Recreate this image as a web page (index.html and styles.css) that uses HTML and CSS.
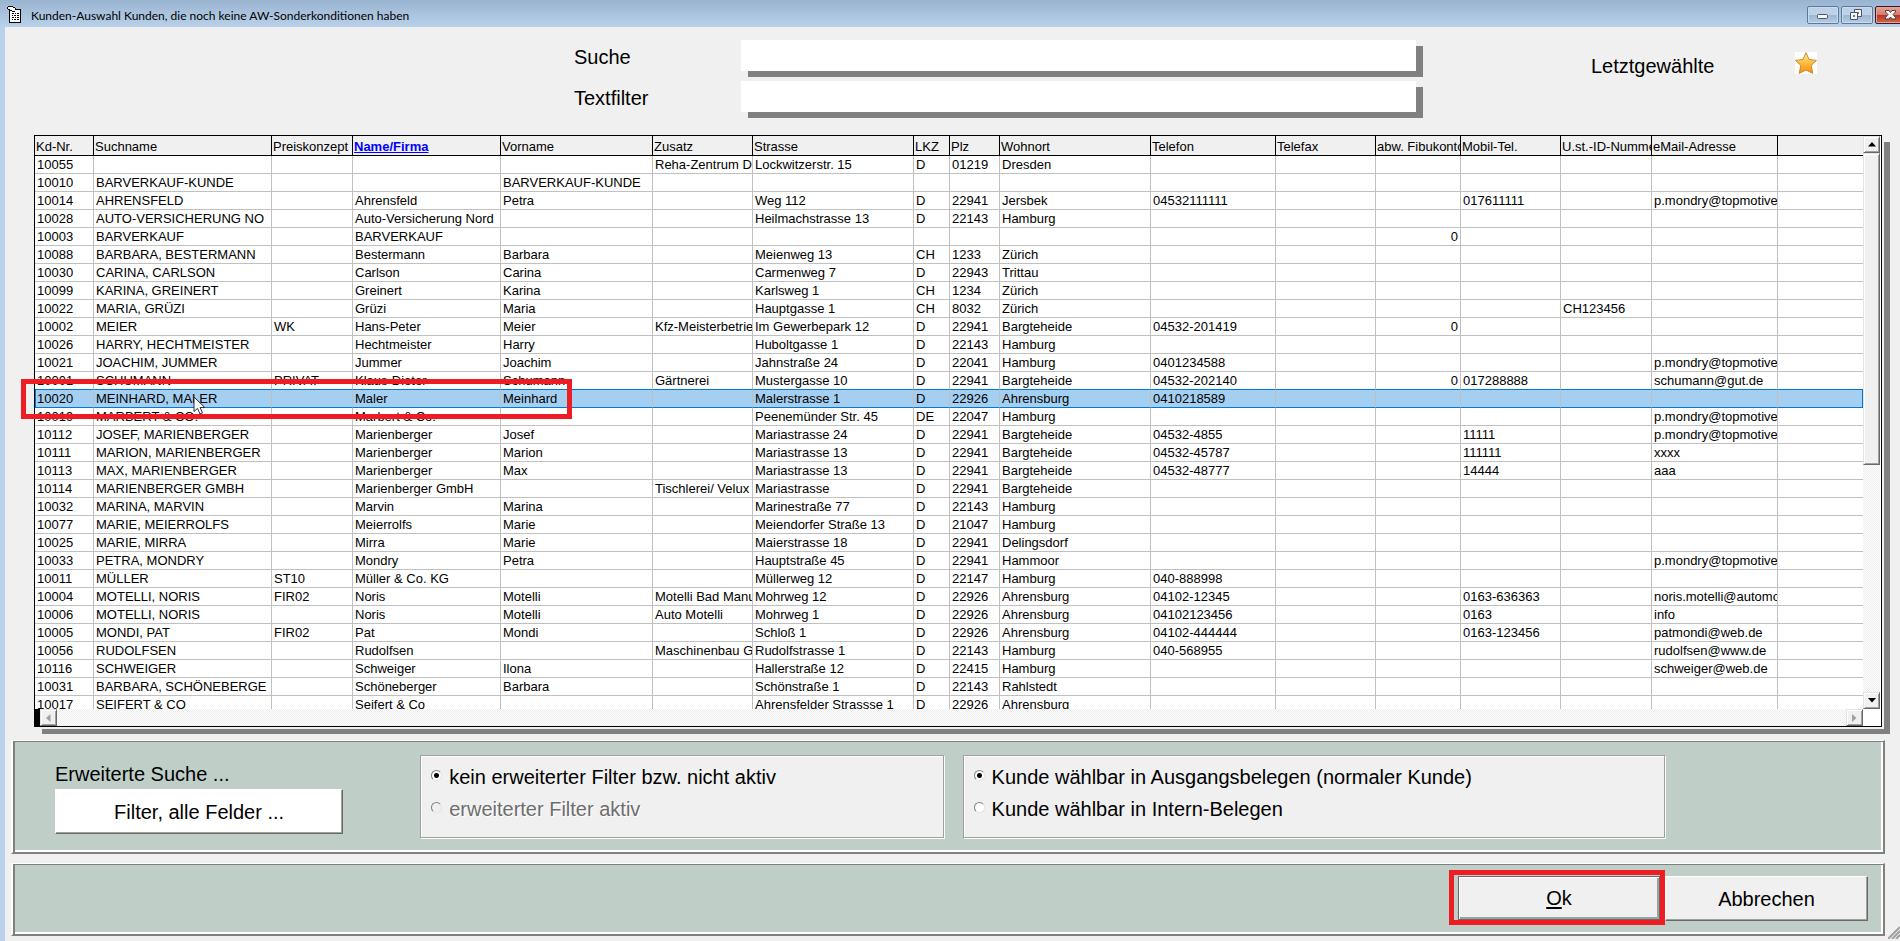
FILE: index.html
```html
<!DOCTYPE html>
<html lang="de">
<head>
<meta charset="utf-8">
<title>Kunden-Auswahl</title>
<link rel="stylesheet" href="styles.css">
</head>
<body>
<header class="titlebar">
  <svg class="app-icon" width="15" height="17" viewBox="0 0 15 17" shape-rendering="crispEdges" aria-hidden="true">
    <path d="M2 3h12v14H2z" fill="#000"/>
    <path d="M3 4h10v12H3z" fill="#fff"/>
    <path d="M5 7h2v1H5zM8 7h1v1H8zM10 7h2v1h-2zM5 9h1v1H5zM7 9h2v1H7zM10 9h2v1h-2zM5 11h2v1H5zM8 11h1v1H8zM10 11h2v1h-2zM5 13h1v1H5zM7 13h2v1H7zM10 13h2v1h-2z" fill="#000"/>
    <path d="M1 1h5v1h2v2h1v2H7V5H4V4H2V3H1z" fill="#fff"/>
    <path d="M1 0h5v1H1zM0 1h1v2H0zM6 1h2v1H6zM8 2h1v2H8zM1 3h2v1H1zM3 4h2v1H3zM5 5h3v1H5z" fill="#000"/>
  </svg>
  <h1 class="title">Kunden-Auswahl Kunden, die noch keine AW-Sonderkonditionen haben</h1>
  <div class="window-buttons">
    <button class="wbtn" type="button" aria-label="Minimieren"><svg width="30" height="16" viewBox="0 0 30 16"><rect x="9.500" y="7.500" width="10" height="4" rx="1" fill="#f4f4f6" stroke="#4c5468"/></svg></button>
    <button class="wbtn" type="button" aria-label="Wiederherstellen"><svg width="30" height="16" viewBox="0 0 30 16"><g fill="#f4f4f6" stroke="#4c5468"><path fill-rule="evenodd" d="M12.500 2.500h7v7h-7zM15.500 5.500h1v1h-1z"/><path fill-rule="evenodd" d="M8.500 5.500h7v7h-7zM11.500 8.500h1v1h-1z"/></g></svg></button>
    <button class="wbtn wbtn-close" type="button" aria-label="Schließen"><svg width="30" height="16" viewBox="0 0 30 16"><path d="M9.500 3.500h3.500l1.500 2 1.500-2h3.500v1.500l-2.500 2.500 2.500 3v1.500h-3.500l-1.500-2-1.500 2H9.500V10.500l2.500-3-2.500-2.500z" fill="#f4f4f6" stroke="#4c4048"/></svg></button>
  </div>
</header>
<main class="window">
  <section class="search">
    <label class="search-label" for="suche">Suche</label>
    <input class="search-input" id="suche" type="text">
    <label class="search-label second" for="textfilter">Textfilter</label>
    <input class="search-input second" id="textfilter" type="text">
    <span class="recent">Letztgewählte</span>
    <button class="star" type="button" aria-label="Letztgewählte anzeigen">
      <svg width="22" height="22" viewBox="0 0 22 22"><defs><linearGradient id="gold" x1="0" y1="0" x2="0" y2="1"><stop offset="0" stop-color="#ffeaa8"/><stop offset=".45" stop-color="#ffc445"/><stop offset="1" stop-color="#f98a0c"/></linearGradient></defs><path d="M11 .7l3.100 6.800 7.400.9-5.300 5 1.600 8L11 18l-6.800 3.400 1.600-8-5.300-5 7.400-.9z" fill="url(#gold)" stroke="#c98a35" stroke-linejoin="round"/></svg>
    </button>
  </section>

  <section class="grid-frame">
    <div class="grid-view">
      <table class="customers">
        <colgroup><col class="w58"><col class="w178"><col class="w81"><col class="w148"><col class="w152"><col class="w100"><col class="w161"><col class="w36"><col class="w50"><col class="w151"><col class="w125"><col class="w100"><col class="w85"><col class="w100"><col class="w91"><col class="w126"><col></colgroup>
        <thead><tr><th>Kd-Nr.<th>Suchname<th>Preiskonzept<th><a class="sorted" href="#">Name/Firma</a><th>Vorname<th>Zusatz<th>Strasse<th>LKZ<th>Plz<th>Wohnort<th>Telefon<th>Telefax<th>abw. Fibukonto<th>Mobil-Tel.<th>U.st.-ID-Nummer<th>eMail-Adresse<th></tr></thead>
        <tbody>
        <tr><td>10055<td><td><td><td><td>Reha-Zentrum De<td>Lockwitzerstr. 15<td>D<td>01219<td>Dresden<td><td><td><td><td><td><td></tr>
        <tr><td>10010<td>BARVERKAUF-KUNDE<td><td><td>BARVERKAUF-KUNDE<td><td><td><td><td><td><td><td><td><td><td><td></tr>
        <tr><td>10014<td>AHRENSFELD<td><td>Ahrensfeld<td>Petra<td><td>Weg 112<td>D<td>22941<td>Jersbek<td>04532111111<td><td><td>017611111<td><td>p.mondry@topmotive<td></tr>
        <tr><td>10028<td>AUTO-VERSICHERUNG NO<td><td>Auto-Versicherung Nord<td><td><td>Heilmachstrasse 13<td>D<td>22143<td>Hamburg<td><td><td><td><td><td><td></tr>
        <tr><td>10003<td>BARVERKAUF<td><td>BARVERKAUF<td><td><td><td><td><td><td><td><td>0<td><td><td><td></tr>
        <tr><td>10088<td>BARBARA, BESTERMANN<td><td>Bestermann<td>Barbara<td><td>Meienweg 13<td>CH<td>1233<td>Zürich<td><td><td><td><td><td><td></tr>
        <tr><td>10030<td>CARINA, CARLSON<td><td>Carlson<td>Carina<td><td>Carmenweg 7<td>D<td>22943<td>Trittau<td><td><td><td><td><td><td></tr>
        <tr><td>10099<td>KARINA, GREINERT<td><td>Greinert<td>Karina<td><td>Karlsweg 1<td>CH<td>1234<td>Zürich<td><td><td><td><td><td><td></tr>
        <tr><td>10022<td>MARIA, GRÜZI<td><td>Grüzi<td>Maria<td><td>Hauptgasse 1<td>CH<td>8032<td>Zürich<td><td><td><td><td>CH123456<td><td></tr>
        <tr><td>10002<td>MEIER<td>WK<td>Hans-Peter<td>Meier<td>Kfz-Meisterbetrieb<td>Im Gewerbepark 12<td>D<td>22941<td>Bargteheide<td>04532-201419<td><td>0<td><td><td><td></tr>
        <tr><td>10026<td>HARRY, HECHTMEISTER<td><td>Hechtmeister<td>Harry<td><td>Huboltgasse 1<td>D<td>22143<td>Hamburg<td><td><td><td><td><td><td></tr>
        <tr><td>10021<td>JOACHIM, JUMMER<td><td>Jummer<td>Joachim<td><td>Jahnstraße 24<td>D<td>22041<td>Hamburg<td>0401234588<td><td><td><td><td>p.mondry@topmotive<td></tr>
        <tr class="before-selected"><td>10001<td>SCHUMANN<td>PRIVAT<td>Klaus-Dieter<td>Schumann<td>Gärtnerei<td>Mustergasse 10<td>D<td>22941<td>Bargteheide<td>04532-202140<td><td>0<td>017288888<td><td>schumann@gut.de<td></tr>
        <tr class="selected"><td>10020<td>MEINHARD, MALER<td><td>Maler<td>Meinhard<td><td>Malerstrasse 1<td>D<td>22926<td>Ahrensburg<td>0410218589<td><td><td><td><td><td></tr>
        <tr><td>10019<td>MARBERT &amp; CO.<td><td>Marbert &amp; Co.<td><td><td>Peenemünder Str. 45<td>DE<td>22047<td>Hamburg<td><td><td><td><td><td>p.mondry@topmotive<td></tr>
        <tr><td>10112<td>JOSEF, MARIENBERGER<td><td>Marienberger<td>Josef<td><td>Mariastrasse 24<td>D<td>22941<td>Bargteheide<td>04532-4855<td><td><td>11111<td><td>p.mondry@topmotive<td></tr>
        <tr><td>10111<td>MARION, MARIENBERGER<td><td>Marienberger<td>Marion<td><td>Mariastrasse 13<td>D<td>22941<td>Bargteheide<td>04532-45787<td><td><td>111111<td><td>xxxx<td></tr>
        <tr><td>10113<td>MAX, MARIENBERGER<td><td>Marienberger<td>Max<td><td>Mariastrasse 13<td>D<td>22941<td>Bargteheide<td>04532-48777<td><td><td>14444<td><td>aaa<td></tr>
        <tr><td>10114<td>MARIENBERGER GMBH<td><td>Marienberger GmbH<td><td>Tischlerei/ Velux<td>Mariastrasse<td>D<td>22941<td>Bargteheide<td><td><td><td><td><td><td></tr>
        <tr><td>10032<td>MARINA, MARVIN<td><td>Marvin<td>Marina<td><td>Marinestraße 77<td>D<td>22143<td>Hamburg<td><td><td><td><td><td><td></tr>
        <tr><td>10077<td>MARIE, MEIERROLFS<td><td>Meierrolfs<td>Marie<td><td>Meiendorfer Straße 13<td>D<td>21047<td>Hamburg<td><td><td><td><td><td><td></tr>
        <tr><td>10025<td>MARIE, MIRRA<td><td>Mirra<td>Marie<td><td>Maierstrasse 18<td>D<td>22941<td>Delingsdorf<td><td><td><td><td><td><td></tr>
        <tr><td>10033<td>PETRA, MONDRY<td><td>Mondry<td>Petra<td><td>Hauptstraße 45<td>D<td>22941<td>Hammoor<td><td><td><td><td><td>p.mondry@topmotive<td></tr>
        <tr><td>10011<td>MÜLLER<td>ST10<td>Müller &amp; Co. KG<td><td><td>Müllerweg 12<td>D<td>22147<td>Hamburg<td>040-888998<td><td><td><td><td><td></tr>
        <tr><td>10004<td>MOTELLI, NORIS<td>FIR02<td>Noris<td>Motelli<td>Motelli Bad Manu<td>Mohrweg 12<td>D<td>22926<td>Ahrensburg<td>04102-12345<td><td><td>0163-636363<td><td>noris.motelli@automo<td></tr>
        <tr><td>10006<td>MOTELLI, NORIS<td><td>Noris<td>Motelli<td>Auto Motelli<td>Mohrweg 1<td>D<td>22926<td>Ahrensburg<td>04102123456<td><td><td>0163<td><td>info<td></tr>
        <tr><td>10005<td>MONDI, PAT<td>FIR02<td>Pat<td>Mondi<td><td>Schloß 1<td>D<td>22926<td>Ahrensburg<td>04102-444444<td><td><td>0163-123456<td><td>patmondi@web.de<td></tr>
        <tr><td>10056<td>RUDOLFSEN<td><td>Rudolfsen<td><td>Maschinenbau G<td>Rudolfstrasse 1<td>D<td>22143<td>Hamburg<td>040-568955<td><td><td><td><td>rudolfsen@www.de<td></tr>
        <tr><td>10116<td>SCHWEIGER<td><td>Schweiger<td>Ilona<td><td>Hallerstraße 12<td>D<td>22415<td>Hamburg<td><td><td><td><td><td>schweiger@web.de<td></tr>
        <tr><td>10031<td>BARBARA, SCHÖNEBERGE<td><td>Schöneberger<td>Barbara<td><td>Schönstraße 1<td>D<td>22143<td>Rahlstedt<td><td><td><td><td><td><td></tr>
        <tr><td>10017<td>SEIFERT &amp; CO<td><td>Seifert &amp; Co<td><td><td>Ahrensfelder Strassse 1<td>D<td>22926<td>Ahrensburg<td><td><td><td><td><td><td></tr>
        </tbody>
      </table>
    </div>
    <div class="vscroll">
      <button class="sbtn" type="button" aria-label="Nach oben"><svg width="8" height="5" viewBox="0 0 8 5"><path d="M4 0l4 4.500H0z"/></svg></button>
      <div class="thumb"></div>
      <button class="sbtn sbtn-end" type="button" aria-label="Nach unten"><svg width="8" height="5" viewBox="0 0 8 5"><path d="M0 0h8L4 4.500z"/></svg></button>
    </div>
    <div class="hscroll">
      <button class="sbtn sbtn-off" type="button" aria-label="Nach links" disabled><svg width="5" height="8" viewBox="0 0 5 8"><path d="M4.500 0v8L0 4z"/></svg></button>
      <button class="sbtn sbtn-off sbtn-end" type="button" aria-label="Nach rechts" disabled><svg width="5" height="8" viewBox="0 0 5 8"><path d="M0 0v8l4.500-4z"/></svg></button>
    </div>
    <div class="corner"></div>
    <div class="mark mark-row"></div>
    <svg class="pointer" width="13" height="20" viewBox="0 0 13 20" aria-hidden="true"><path d="M1 1v14.500l3.500-3.200L7 18l2.500-1.100L7.100 11.500h4.700z" fill="#fff" stroke="#222a4a"/></svg>
  </section>

  <section class="panel filters">
    <div class="advanced">
      <span class="advanced-title">Erweiterte Suche ...</span>
      <button class="btn btn-filter" type="button">Filter, alle Felder ...</button>
    </div>
    <div class="group group-a">
      <label class="choice"><input class="radio" type="radio" name="filter" checked>kein erweiterter Filter bzw. nicht aktiv</label>
      <label class="choice off"><input class="radio" type="radio" name="filter" disabled>erweiterter Filter aktiv</label>
    </div>
    <div class="group group-b">
      <label class="choice"><input class="radio" type="radio" name="art" checked>Kunde wählbar in Ausgangsbelegen (normaler Kunde)</label>
      <label class="choice"><input class="radio" type="radio" name="art">Kunde wählbar in Intern-Belegen</label>
    </div>
  </section>

  <section class="panel actions">
    <div class="ok-wrap"><button class="btn btn-ok" type="button"><u>O</u>k</button><div class="mark mark-ok"></div></div>
    <button class="btn btn-cancel" type="button">Abbrechen</button>
  </section>
  <svg class="grip" width="12" height="14" viewBox="0 0 12 14" aria-hidden="true"><path d="M0 14L12 2M4 14l8-8M8 14l4-4" stroke="#a0a0a0" stroke-width="2"/></svg>
</main>
</body>
</html>
```
FILE: styles.css
```css
* { box-sizing: border-box; }

body {
  margin: 0;
  height: 100vh;
  display: flex;
  flex-direction: column;
  overflow: hidden;
  background: #b9d1ea;
  color: #000;
  font: 20px/24px "Liberation Sans", Arial, sans-serif;
}

button, input { margin: 0; padding: 0; font: inherit; color: inherit; border-radius: 0; }

/* title bar */
.titlebar {
  flex: none;
  display: flex;
  height: 27px;
  padding: 6px 0 0 7px;
  background: linear-gradient(#99b4d1, #b9d1ea);
}
.app-icon { flex: none; }
.title {
  flex: 1;
  margin: 0 0 0 9px;
  font: 12px/19px Lato, "Open Sans", sans-serif;
  white-space: nowrap;
}
.window-buttons { display: flex; gap: 2px; width: 93px; overflow: hidden; }
.wbtn {
  flex: none;
  width: 32px;
  height: 18px;
  border: 1px solid #5f7896;
  border-radius: 2px;
  background: linear-gradient(#bdd1e8 50%, #9cb6d3 50%, #b3cde6);
  box-shadow: inset 0 0 0 1px #c9dcef;
}
.wbtn svg { display: block; }
.wbtn-close {
  border-color: #431422;
  background: linear-gradient(#e5a294, #d5796a 50%, #b8321d 50%, #cf6a50);
  box-shadow: inset 0 0 0 1px #e0a498;
}

/* window body */
.window {
  position: relative;
  flex: 1;
  min-height: 0;
  display: flex;
  flex-direction: column;
  margin-left: 5px;
  padding-bottom: 5px;
  background: #f0f0f0;
}

.search {
  flex: none;
  display: grid;
  grid-template-columns: minmax(0, 569fr) minmax(0, 167fr) minmax(0, 675fr) minmax(0, 175fr) minmax(0, 204fr) minmax(0, 105fr);
  grid-template-rows: 31px 31px;
  row-gap: 10px;
  height: 108px;
  padding-top: 13px;
}
.search-label { grid-column: 2; padding-top: 5px; }
.search-input {
  grid-column: 3;
  height: 31px;
  border: 0;
  background: #fff;
  box-shadow: 7px 6px 0 #808080;
  padding: 0 6px;
}
.recent { grid-column: 5; grid-row: 1 / 3; padding-top: 14px; }
.star {
  grid-column: 6;
  grid-row: 1 / 3;
  width: 22px;
  height: 22px;
  margin-top: 12px;
  border: 0;
  background: #fff;
}
.star svg { display: block; }

/* customer list */
.grid-frame {
  position: relative;
  flex: 1;
  min-height: 0;
  display: grid;
  grid-template-columns: minmax(0, 1fr) 18px;
  grid-template-rows: minmax(0, 1fr) 17px;
  margin: 0 18px 13px 29px;
  border: 1px solid #000;
  background: #fff;
  box-shadow: 2px 2px 0 #f0f0f0, 8px 7px 0 #808080;
}
.grid-view { overflow: hidden; }
.customers {
  width: 100%;
  table-layout: fixed;
  border-collapse: separate;
  border-spacing: 0;
  font-size: 13px;
  line-height: 17px;
}
.w36 { width: 36px; }
.w50 { width: 50px; }
.w58 { width: 58px; }
.w81 { width: 81px; }
.w85 { width: 85px; }
.w91 { width: 91px; }
.w100 { width: 100px; }
.w125 { width: 125px; }
.w126 { width: 126px; }
.w148 { width: 148px; }
.w151 { width: 151px; }
.w152 { width: 152px; }
.w161 { width: 161px; }
.w178 { width: 178px; }
.customers th {
  height: 20px;
  padding: 2px 0 0 1px;
  border-left: 1px solid #000;
  border-bottom: 1px solid #000;
  background: #f0f0f0;
  font-weight: normal;
  text-align: left;
  white-space: nowrap;
  overflow: hidden;
}
.customers td {
  height: 18px;
  padding: 0 0 0 2px;
  border-left: 1px solid #c0c0c0;
  border-bottom: 1px solid #c0c0c0;
  white-space: nowrap;
  overflow: hidden;
}
.customers th:first-child, .customers td:first-child { border-left: 0; }
.customers td:nth-child(13) { padding-right: 2px; text-align: right; }
.sorted { color: #00f; font-weight: bold; }
.before-selected td { border-bottom-color: #0078d7; }
.selected td { background: #a5cff1; border-bottom-color: #0078d7; }
.selected td:first-child { box-shadow: inset 1px 0 0 #0078d7; }
.selected td:last-child { box-shadow: inset -1px 0 0 #0078d7; }

/* scroll bars */
.vscroll, .hscroll {
  display: flex;
  background: repeating-conic-gradient(#ececec 0 25%, #fff 0 50%) 0 0 / 2px 2px;
}
.vscroll { flex-direction: column; border-right: 1px solid #fff; }
.hscroll { border-left: 5px solid #000; }
.sbtn {
  flex: none;
  display: flex;
  align-items: center;
  justify-content: center;
  width: 17px;
  height: 17px;
  border: 1px solid;
  border-color: #e3e3e3 #696969 #696969 #e3e3e3;
  background: #f0f0f0;
  box-shadow: inset 1px 1px 0 #fff, inset -1px -1px 0 #a0a0a0;
}
.sbtn-end { margin-top: auto; }
.hscroll .sbtn-end { margin: 0 0 0 auto; }
.sbtn-off { fill: #a0a0a0; }
.thumb {
  flex: 0 0 56%;
  max-height: 312px;
  border: 1px solid;
  border-color: #e3e3e3 #696969 #696969 #e3e3e3;
  background: #f0f0f0;
  box-shadow: inset 1px 1px 0 #fff, inset -1px -1px 0 #a0a0a0;
}
.corner { background: #fff; }

/* red highlight frames and the mouse pointer lie over the content */
.mark { position: absolute; border: 5px solid #ee1c23; pointer-events: none; }
.mark-row { left: -14px; top: 243px; width: 551px; height: 40px; }
.mark-ok { inset: -6px -5px -5px -9px; }
.pointer { position: absolute; left: 158px; top: 260px; }

/* lower panels */
.panel {
  flex: none;
  margin: 0 15px 9px 6px;
  border: 2px solid;
  border-width: 1px 2px 2px 2px;
  border-color: #fff #808080 #808080 #fff;
  background: #bfcfc8;
  box-shadow: inset 2px 1px 0 #808080, inset -2px -2px 0 #fff;
}
.filters {
  display: grid;
  grid-template-columns: minmax(0, 288fr) minmax(0, 600fr) minmax(0, 721fr);
  height: 114px;
  padding: 14px 218px 15px 42px;
}
.advanced { padding-top: 7px; }
.advanced-title { display: block; padding-bottom: 3px; }
.btn {
  display: block;
  border: 1px solid;
  border-color: #fff #696969 #696969 #fff;
  background: #f0f0f0;
  box-shadow: inset -1px -1px 0 #a0a0a0;
}
.btn-filter { width: 100%; height: 45px; background: #fff; }
.group {
  display: flex;
  flex-direction: column;
  gap: 8px;
  height: 83px;
  padding: 9px 10px;
  border: 1px solid #a0a0a0;
  background: #f0f0f0;
  box-shadow: inset 1px 1px 0 #fff, 1px 1px 0 #fff;
}
.group-a { margin-left: 77px; }
.group-b { margin-left: 19px; }
.choice { display: flex; white-space: nowrap; }
.choice.off { color: #6d6d6d; text-shadow: 1px 1px 0 #fff; }
.radio {
  appearance: none;
  flex: none;
  width: 11px;
  height: 11px;
  margin: 5px 7px 0 0;
  border: 1px solid;
  border-color: #808080 #e3e3e3 #e3e3e3 #808080;
  border-radius: 50%;
  background: #fff;
}
.radio:checked { background: radial-gradient(#000 0 2px, #fff 3px); }
.radio:disabled { background: #f0f0f0; }
.actions {
  display: flex;
  align-items: flex-start;
  justify-content: flex-end;
  height: 73px;
  margin-bottom: 0;
  padding: 12px 15px 0 0;
}
.ok-wrap { position: relative; }
.btn-ok {
  width: 202px;
  height: 44px;
  border-color: #696969;
  box-shadow: inset 1px 1px 0 #fff, inset -2px -2px 0 #a0a0a0;
}
.btn-ok u { text-underline-offset: 2px; }
.btn-cancel { width: 203px; height: 45px; margin-left: 5px; }
.grip { position: absolute; right: 0; bottom: 2px; }
```
